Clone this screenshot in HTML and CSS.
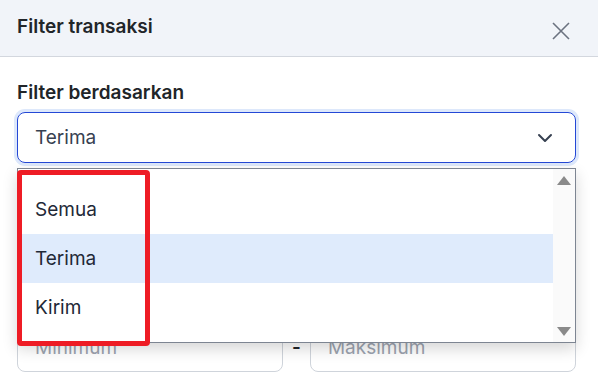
FILE: index.html
```html
<!DOCTYPE html>
<html lang="id">
<head>
  <meta charset="UTF-8">
  <title>Filter transaksi</title>
  <link rel="stylesheet" href="styles.css">
</head>
<body>
  <div class="modal">
    <div class="modal-header">
      <h3>Filter transaksi</h3>
      <svg class="close" width="20" height="20" viewBox="0 0 20 20">
        <path d="M2 2 L18 18 M18 2 L2 18" stroke="#6b7280" stroke-width="1.6" fill="none"/>
      </svg>
    </div>

    <div class="modal-body">
      <label class="field-label">Filter berdasarkan</label>
      <div class="select-wrap">
        <div class="select">
          <span>Terima</span>
          <svg width="16" height="10" viewBox="0 0 16 10">
            <path d="M2 2 L8 8 L14 2" stroke="#374151" stroke-width="2" fill="none" stroke-linecap="round" stroke-linejoin="round"/>
          </svg>
        </div>

        <!-- opened native list, drawn over the fields below -->
        <div class="dropdown">
          <ul class="options">
            <li>Semua</li>
            <li class="active">Terima</li>
            <li>Kirim</li>
          </ul>
          <div class="scrollbar">
            <span class="arrow up"></span>
            <span class="arrow down"></span>
          </div>
        </div>
        <div class="mark"></div>
      </div>

      <div class="range">
        <div class="input">Minimum</div>
        <span class="dash">-</span>
        <div class="input">Maksimum</div>
      </div>
    </div>
  </div>
</body>
</html>
```

FILE: styles.css
```css
body {
  margin: 0;
  font-family: Inter, "Noto Sans", sans-serif;
  background: #fff;
  color: #212529;
}
.modal {
  width: 598px;
  height: 382px;
  overflow: hidden;
}
.modal-header {
  height: 57px;
  box-sizing: border-box;
  background: #f1f4f9;
  border-bottom: 1px solid #d3d7de;
  display: flex;
  align-items: center;
  justify-content: space-between;
  padding: 0 27px 0 17px;
}
.modal-header h3 {
  margin: 0;
  font-size: 19px;
  font-weight: 600;
  margin-top: -4px;
}
.close {
  margin-top: 5px;
}
.modal-body {
  padding: 24px 22px 0 17px;
}
.field-label {
  display: block;
  font-size: 19px;
  font-weight: 600;
  margin-bottom: 8px;
}
.select-wrap {
  position: relative;
  /* room for the date fields hidden behind the open list */
  margin-bottom: 159px;
}
.select {
  height: 51px;
  box-sizing: border-box;
  border: 1px solid #2448d6;
  border-radius: 8px;
  box-shadow: 0 0 0 3px #dde8fb;
  display: flex;
  align-items: center;
  justify-content: space-between;
  padding: 0 22px 0 17px;
  font-size: 19px;
  color: #374151;
}
.dropdown {
  position: absolute;
  left: 0;
  right: 0;
  top: 56px;
  height: 175px;
  box-sizing: border-box;
  border: 1px solid #7d8592;
  background: #fff;
  display: flex;
  box-shadow: 0 6px 14px rgba(0, 0, 0, 0.16);
  z-index: 2;
}
.options {
  list-style: none;
  margin: 0;
  padding: 16px 0 0;
  flex: 1;
}
.options li {
  height: 49px;
  display: flex;
  align-items: center;
  padding-left: 17px;
  font-size: 19px;
  color: #1f2937;
}
.options li.active {
  background: #dfebfc;
}
.scrollbar {
  width: 22px;
  background: #fafafa;
  display: flex;
  flex-direction: column;
  justify-content: space-between;
  align-items: center;
  padding: 7px 0 6px;
}
.arrow {
  width: 0;
  height: 0;
  border-left: 7px solid transparent;
  border-right: 7px solid transparent;
}
.arrow.up {
  border-bottom: 9px solid #8a8a8a;
}
.arrow.down {
  border-top: 9px solid #8a8a8a;
}
.mark {
  position: absolute;
  left: 0;
  top: 58px;
  width: 133px;
  height: 176px;
  box-sizing: border-box;
  border: 5px solid #ee1c25;
  border-radius: 4px;
  z-index: 3;
}
.range {
  display: flex;
  align-items: center;
  gap: 9px;
}
.input {
  flex: 1;
  height: 50px;
  box-sizing: border-box;
  border: 1px solid #cfd4db;
  border-radius: 8px;
  display: flex;
  align-items: center;
  padding-left: 17px;
  font-size: 19px;
  color: #9ca3af;
}
.dash {
  font-size: 19px;
  font-weight: 600;
  color: #212529;
}
```
